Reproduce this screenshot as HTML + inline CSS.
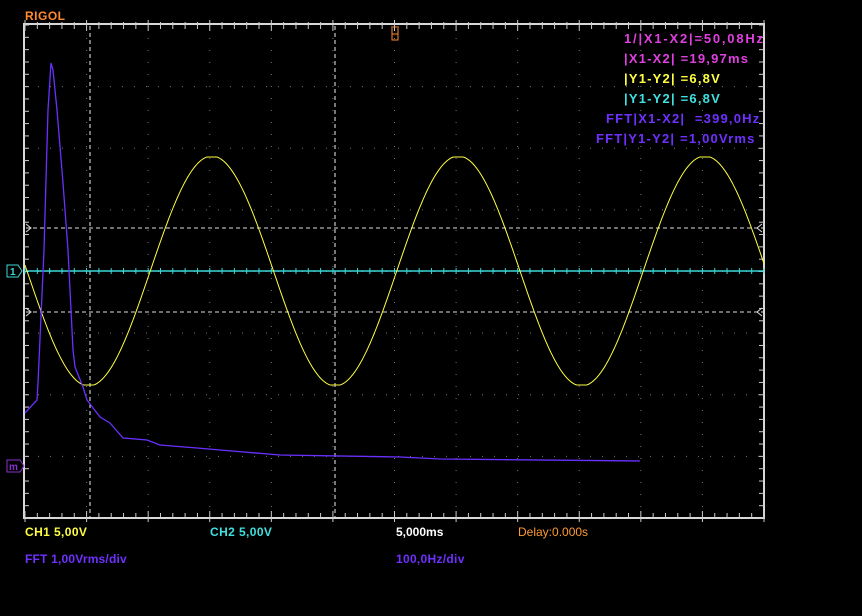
<!DOCTYPE html>
<html><head><meta charset="utf-8"><style>
html,body{margin:0;padding:0;background:#000;}
body{width:862px;height:616px;overflow:hidden;position:relative;font-family:"Liberation Sans",sans-serif;font-weight:bold;font-size:12px;}
.t{position:absolute;white-space:nowrap;}
.r{font-size:13px;letter-spacing:1.2px;}
</style></head><body>
<svg id="s" width="862" height="616" style="position:absolute;left:0;top:0">
<rect x="24" y="24" width="740" height="494" fill="none" stroke="#d8d8d8" stroke-width="2"/>
<g id="grid"></g>
<line x1="90" y1="26" x2="90" y2="517" stroke="#eee" stroke-dasharray="4,3"/>
<line x1="335" y1="26" x2="335" y2="517" stroke="#eee" stroke-dasharray="4,3"/>
<line x1="26" y1="228" x2="763" y2="228" stroke="#ddd" stroke-dasharray="4,3"/>
<line x1="26" y1="312" x2="763" y2="312" stroke="#ddd" stroke-dasharray="4,3"/>
<path d="M26 224 l5 4 l-5 4 M26 308 l5 4 l-5 4 M762 224 l-5 4 l5 4 M762 308 l-5 4 l5 4" stroke="#ddd" fill="none"/>
<line x1="26" y1="271" x2="763" y2="271" stroke="#3cd8d8" stroke-width="1.5"/>
<polyline id="y" fill="none" stroke="#ffff40" stroke-width="1"/>
<polyline fill="none" stroke="#6a30ff" stroke-width="1.3" points="25,413 37,400 38,383 44,250 48,110 51,63 53,70 57,110 63,183 68,250 73,350 75,367 83,387 87,400 100,417 110,423 123,438 147,440 160,445 197,448 220,450 280,455 400,457 440,459 640,461"/>
<path d="M7 265 h11 l4 6 l-4 6 h-11 z" fill="none" stroke="#3cd8d8"/>
<text x="10" y="275" fill="#3cd8d8" font-size="10" font-family="Liberation Sans">1</text>
<path d="M7 460 h13 l4 6 l-4 6 h-13 z" fill="none" stroke="#8a30d0"/>
<text x="9" y="470" fill="#8a30d0" font-size="10" font-family="Liberation Sans">m</text>
<path d="M391 27 h8 M392 28 v12 h6 v-12 M392 34 h6" stroke="#ff8a30" fill="none"/>
</svg>
<div class="t" style="left:25px;top:9px;color:#ff8a30;font-size:12px;letter-spacing:0.5px">RIGOL</div>
<div class="t r" style="left:624px;top:31px;color:#e040e0;letter-spacing:1.8px">1/|X1-X2|=50,08Hz</div>
<div class="t r" style="left:624px;top:51px;color:#e040e0">|X1-X2| =19,97ms</div>
<div class="t r" style="left:624px;top:71px;color:#ffff40">|Y1-Y2| =6,8V</div>
<div class="t r" style="left:624px;top:91px;color:#40e0e0">|Y1-Y2| =6,8V</div>
<div class="t r" style="left:606px;top:111px;color:#7030ff">FFT|X1-X2| &nbsp;=399,0Hz</div>
<div class="t r" style="left:596px;top:131px;color:#7030ff">FFT|Y1-Y2| =1,00Vrms</div>
<div class="t" style="left:25px;top:525px;color:#ffff40;letter-spacing:0.4px">CH1 5,00V</div>
<div class="t" style="left:210px;top:525px;color:#40e0e0;letter-spacing:0.4px">CH2 5,00V</div>
<div class="t" style="left:396px;top:525px;color:#fff">5,000ms</div>
<div class="t" style="left:518px;top:525px;color:#ff9a30;font-weight:normal">Delay:0.000s</div>
<div class="t" style="left:25px;top:552px;color:#7030ff;letter-spacing:0.2px">FFT 1,00Vrms/div</div>
<div class="t" style="left:396px;top:552px;color:#7030ff;letter-spacing:0.3px">100,0Hz/div</div>
<script>
var g=document.getElementById('grid'),h='';
var L=25,T=25,W=739,H=493,dx=W/12,dy=H/8;
for(var i=1;i<12;i++){var x=L+i*dx;h+='<line x1="'+x+'" y1="26" x2="'+x+'" y2="517" stroke="#777" stroke-dasharray="1,11"/>';}
for(var j=1;j<8;j++){var y=T+j*dy;h+='<line x1="26" y1="'+y+'" x2="763" y2="'+y+'" stroke="#777" stroke-dasharray="1,11"/>';}
for(var k=0;k<=60;k++){var x=L+k*dx/5;h+='<line x1="'+x+'" y1="'+(k%5?22:20)+'" x2="'+x+'" y2="'+(k%5?29:31)+'" stroke="#ccc"/><line x1="'+x+'" y1="'+(k%5?513:511)+'" x2="'+x+'" y2="'+(k%5?518:522)+'" stroke="#ccc"/>';}
for(var k=0;k<=40;k++){var y=T+k*dy/5;h+='<line x1="24" y1="'+y+'" x2="29" y2="'+y+'" stroke="#ccc"/><line x1="759" y1="'+y+'" x2="764" y2="'+y+'" stroke="#ccc"/>';}
for(var k=0;k<=60;k++){var x=L+k*dx/5;h+='<line x1="'+x+'" y1="268" x2="'+x+'" y2="274" stroke="#3cd8d8"/>';}
g.innerHTML=h;
var p=[];for(var x=25;x<=764;x++){var v=271+115*Math.sin(2*Math.PI*(x-27)/246.5);v=Math.max(157,Math.min(385,v));p.push(x+','+v.toFixed(1));}
document.getElementById('y').setAttribute('points',p.join(' '));
</script>
</body></html>
